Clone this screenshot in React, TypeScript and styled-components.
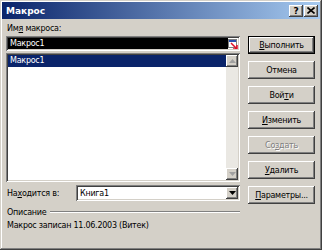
import React from "react";
import styled, { createGlobalStyle } from "styled-components";

const Global = createGlobalStyle`
  html, body { margin:0; padding:0; background:#D4D0C8; }
  body { font-family: "DejaVu Sans", Tahoma, sans-serif; font-size:8px; letter-spacing:-0.25px; color:#000; }
`;

const raised = `
  box-shadow: inset -1px -1px #404040, inset 1px 1px #fff, inset -2px -2px #808080, inset 2px 2px #D4D0C8;
`;
const sunken = `
  box-shadow: inset 1px 1px #808080, inset -1px -1px #fff, inset 2px 2px #404040, inset -2px -2px #D4D0C8;
`;

const Window = styled.div`
  width:322px;
  height:250px;
  box-sizing:border-box;
  background:#D4D0C8;
  padding:2px;
  box-shadow: inset -1px -1px #404040, inset 1px 1px #D4D0C8, inset -2px -2px #808080, inset 2px 2px #fff;
  display:flex;
  flex-direction:column;
`;

const TitleBar = styled.div`
  height:17px;
  display:flex;
  align-items:center;
  justify-content:space-between;
  background:linear-gradient(to right, #0A246A, #A6CAF0);
  padding:0 2px 0 4px;
`;

const Title = styled.span`
  color:#fff;
  font-weight:bold;
  font-size:9px;
  letter-spacing:0;
`;

const CapButtons = styled.div`
  display:flex;
  gap:1px;
`;

const CapButton = styled.div`
  width:14px;
  height:12px;
  box-sizing:border-box;
  background:#D4D0C8;
  ${raised}
  display:flex;
  align-items:center;
  justify-content:center;
  font-weight:bold;
  font-size:9px;
`;

const Body = styled.div`
  display:grid;
  grid-template-columns:234px 67px;
  column-gap:8px;
  padding:4px 4px 0 4px;
`;

const LeftCol = styled.div`
  display:flex;
  flex-direction:column;
`;

const Label = styled.div`
  height:12px;
  line-height:12px;
  padding-left:1px;
`;

const NameField = styled.div`
  margin-top:1px;
  height:15px;
  box-sizing:border-box;
  padding:2px;
  background:#fff;
  ${sunken}
  display:flex;
  align-items:center;
`;

const Selected = styled.div`
  flex:1;
  height:100%;
  background:#000;
  color:#fff;
  line-height:11px;
  padding-left:2px;
`;

const RefIcon = styled.div`
  width:10px;
  height:11px;
  display:flex;
  align-items:center;
  justify-content:center;
`;

const ListBox = styled.div`
  margin-top:2px;
  height:129px;
  box-sizing:border-box;
  padding:2px;
  background:#fff;
  ${sunken}
  display:flex;
`;

const Items = styled.div`
  flex:1;
`;

const Item = styled.div<{ $active?: boolean }>`
  height:12px;
  line-height:12px;
  padding-left:2px;
  background:${(p) => (p.$active ? "#0A246A" : "transparent")};
  color:${(p) => (p.$active ? "#fff" : "#000")};
`;

const ScrollBar = styled.div`
  width:12px;
  display:flex;
  flex-direction:column;
  justify-content:space-between;
  background:#EAE8E3;
`;

const ScrollBtn = styled.div`
  width:12px;
  height:12px;
  box-sizing:border-box;
  background:#D4D0C8;
  ${raised}
  display:flex;
  align-items:center;
  justify-content:center;
`;

const LocRow = styled.div`
  margin-top:3px;
  display:flex;
  align-items:center;
  height:16px;
`;

const LocLabel = styled.div`
  width:69px;
  padding-left:1px;
`;

const Combo = styled.div`
  flex:1;
  height:16px;
  box-sizing:border-box;
  padding:2px;
  background:#fff;
  ${sunken}
  display:flex;
  align-items:center;
`;

const ComboText = styled.div`
  flex:1;
  padding-left:2px;
`;

const DescHead = styled.div`
  margin-top:5px;
  display:flex;
  align-items:center;
  gap:4px;
  height:12px;
  padding-left:1px;
`;

const Groove = styled.div`
  flex:1;
  height:0;
  border-top:1px solid #808080;
  border-bottom:1px solid #fff;
`;

const DescText = styled.div`
  margin-top:3px;
  padding-left:1px;
`;

const RightCol = styled.div`
  display:flex;
  flex-direction:column;
  gap:7px;
  padding-top:13px;
`;

const Button = styled.div<{ $def?: boolean; $disabled?: boolean }>`
  height:18px;
  box-sizing:border-box;
  background:#D4D0C8;
  display:flex;
  align-items:center;
  justify-content:center;
  color:${(p) => (p.$disabled ? "#808080" : "#000")};
  text-shadow:${(p) => (p.$disabled ? "1px 1px #fff" : "none")};
  ${(p) =>
    p.$def
      ? `box-shadow: inset 0 0 0 1px #000, inset -2px -2px #404040, inset 2px 2px #fff, inset -3px -3px #808080;`
      : raised}
`;

const U = styled.span`
  text-decoration:underline;
`;

const Arrow = ({ up, color }: { up?: boolean; color: string }) => (
  <svg width="7" height="4" viewBox="0 0 7 4">
    <polygon points={up ? "3.5,0 7,4 0,4" : "0,0 7,0 3.5,4"} fill={color} />
  </svg>
);

const buttons = [
  { pre: "", u: "В", post: "ыполнить", def: true },
  { pre: "Отмена", u: "", post: "" },
  { pre: "Вой", u: "т", post: "и" },
  { pre: "", u: "И", post: "зменить" },
  { pre: "Со", u: "з", post: "дать", disabled: true },
  { pre: "", u: "У", post: "далить" },
  { pre: "", u: "П", post: "араметры..." },
];

export default function App() {
  return (
    <>
      <Global />
      <Window>
        <TitleBar>
          <Title>Макрос</Title>
          <CapButtons>
            <CapButton>?</CapButton>
            <CapButton>
              <svg width="8" height="7" viewBox="0 0 8 7">
                <path d="M0.5 0.5 L7.5 6.5 M7.5 0.5 L0.5 6.5" stroke="#000" strokeWidth="1.6" />
              </svg>
            </CapButton>
          </CapButtons>
        </TitleBar>
        <Body>
          <LeftCol>
            <Label>
              Им<U>я</U> макроса:
            </Label>
            <NameField>
              <Selected>Макрос1</Selected>
              <RefIcon>
                <svg width="10" height="10" viewBox="0 0 10 10">
                  <rect x="0.5" y="0.5" width="8" height="8" fill="#fff" stroke="#808080" />
                  <rect x="1" y="1" width="7" height="2" fill="#2850B0" />
                  <path d="M3 4 L9 10 M9 6 L9 10 L5 10" stroke="#E0102A" strokeWidth="1.5" fill="none" />
                </svg>
              </RefIcon>
            </NameField>
            <ListBox>
              <Items>
                <Item $active>Макрос1</Item>
              </Items>
              <ScrollBar>
                <ScrollBtn>
                  <Arrow up color="#A0A0A0" />
                </ScrollBtn>
                <ScrollBtn>
                  <Arrow color="#A0A0A0" />
                </ScrollBtn>
              </ScrollBar>
            </ListBox>
            <LocRow>
              <LocLabel>
                На<U>х</U>одится в:
              </LocLabel>
              <Combo>
                <ComboText>Книга1</ComboText>
                <ScrollBtn>
                  <Arrow color="#000" />
                </ScrollBtn>
              </Combo>
            </LocRow>
            <DescHead>
              <span>Описание</span>
              <Groove />
            </DescHead>
            <DescText>Макрос записан 11.06.2003 (Витек)</DescText>
          </LeftCol>
          <RightCol>
            {buttons.map((b, i) => (
              <Button key={i} $def={b.def} $disabled={b.disabled}>
                {b.pre}
                {b.u && <U>{b.u}</U>}
                {b.post}
              </Button>
            ))}
          </RightCol>
        </Body>
      </Window>
    </>
  );
}
